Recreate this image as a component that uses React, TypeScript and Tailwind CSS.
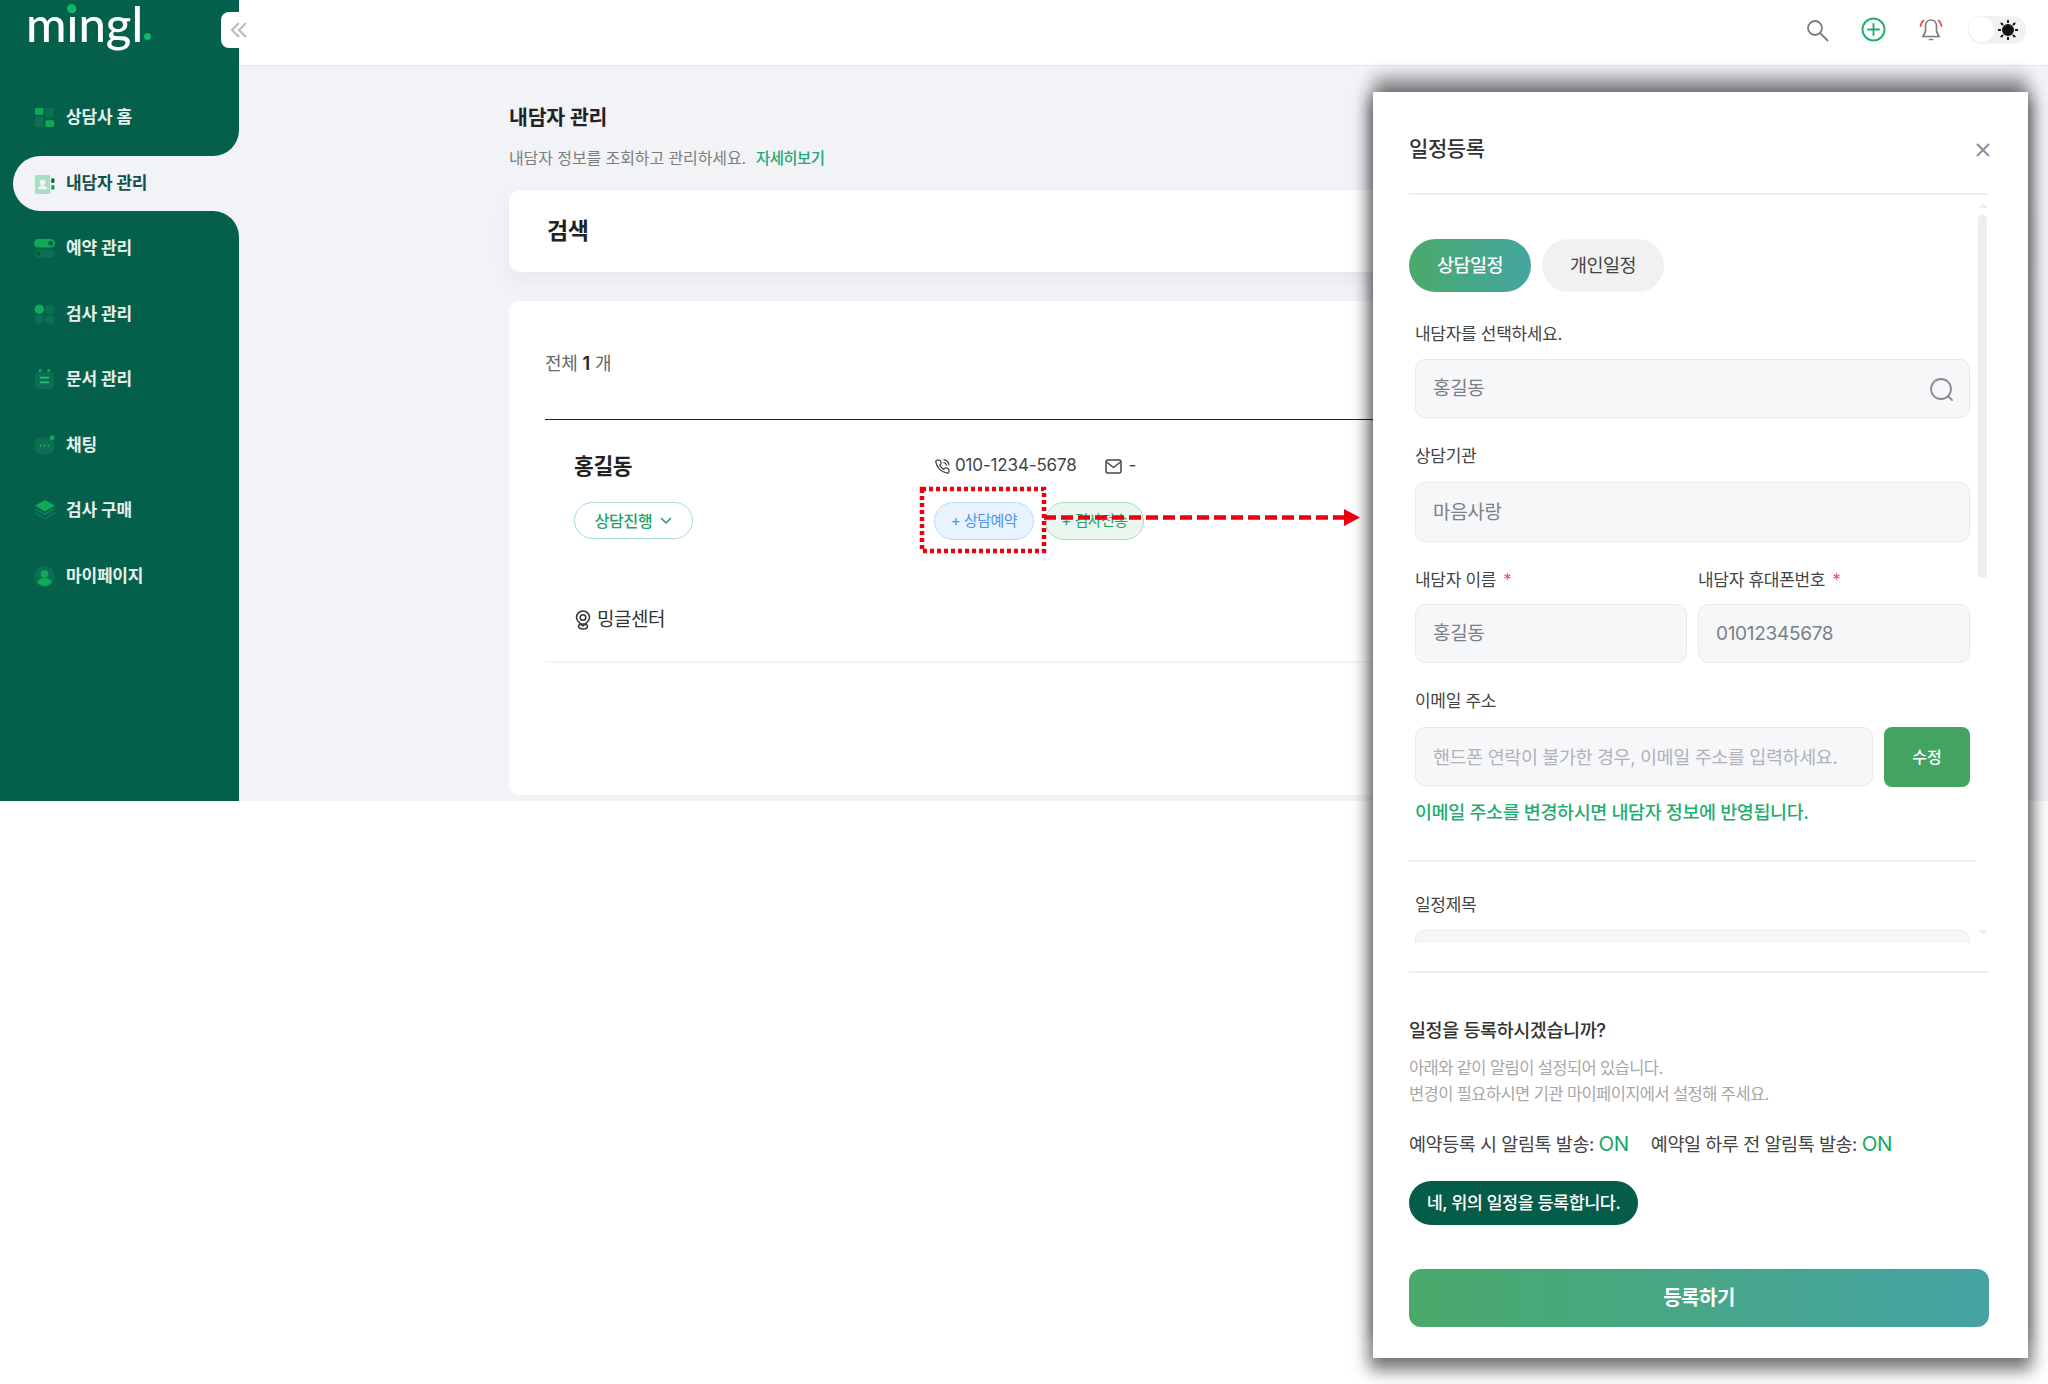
import React from "react";

const G1 = "#0fa958";
const G2 = "#0a7050";

const IconHome = () => (
  <svg width="21" height="21" viewBox="0 0 22 22">
    <rect x="1" y="1" width="9" height="7" rx="1.5" fill={G1} />
    <rect x="12" y="1" width="9" height="10" rx="1.5" fill={G2} />
    <rect x="1" y="10" width="9" height="11" rx="1.5" fill={G2} />
    <rect x="12" y="14" width="9" height="7" rx="1.5" fill={G1} />
  </svg>
);
const IconClient = () => (
  <svg width="21" height="21" viewBox="0 0 22 22">
    <rect x="1" y="1" width="16" height="20" rx="2" fill="#a9dfc6" />
    <circle cx="9" cy="9" r="3" fill="#eef7f2" />
    <path d="M4 16c.6-3 2.6-4 5-4s4.400 1 5 4z" fill="#eef7f2" />
    <rect x="18" y="4.500" width="3.500" height="5" rx="1.500" fill={G2} />
    <rect x="18" y="11.500" width="3.500" height="5" rx="1.500" fill={G1} />
  </svg>
);
const IconToggle = () => (
  <svg width="21" height="21" viewBox="0 0 22 22">
    <rect x="0" y="1" width="22" height="9" rx="4.500" fill={G1} />
    <circle cx="17.500" cy="5.500" r="2.500" fill="#046049" />
    <rect x="0" y="12" width="22" height="9" rx="4.500" fill={G2} />
    <circle cx="4.500" cy="16.500" r="2.500" fill="#046049" />
  </svg>
);
const IconDots = () => (
  <svg width="21" height="21" viewBox="0 0 22 22">
    <circle cx="5.500" cy="5.500" r="5" fill={G1} />
    <circle cx="16.500" cy="5.500" r="5" fill={G2} />
    <circle cx="5.500" cy="16.500" r="5" fill={G2} />
    <circle cx="16.500" cy="16.500" r="5" fill={G2} />
  </svg>
);
const IconDoc = () => (
  <svg width="21" height="21" viewBox="0 0 22 22">
    <rect x="5" y="0" width="3" height="5" rx="1" fill={G1} />
    <rect x="14" y="0" width="3" height="5" rx="1" fill={G1} />
    <rect x="1" y="3" width="20" height="18" rx="4" fill={G2} />
    <rect x="6" y="8" width="10" height="2" rx="1" fill="#2cbf7a" />
    <rect x="6" y="13" width="10" height="2" rx="1" fill="#2cbf7a" />
  </svg>
);
const IconChat = () => (
  <svg width="21" height="21" viewBox="0 0 22 22">
    <path d="M7 3h8c3.500 0 6 2.500 6 6v4c0 4-2.500 7-6 7H7c-3.500 0-6-3-6-7V9c0-3.500 2.500-6 6-6z" fill={G2} />
    <circle cx="7" cy="11" r=".9" fill="#2cbf7a" />
    <circle cx="11" cy="11" r=".9" fill="#2cbf7a" />
    <circle cx="15" cy="11" r=".9" fill="#2cbf7a" />
    <circle cx="19" cy="3" r="2.600" fill={G1} />
  </svg>
);
const IconLayers = () => (
  <svg width="22" height="21" viewBox="0 0 23 22">
    <path d="M1 15l10.500 6L22 15v-3l-10.500 6L1 12z" fill={G2} />
    <path d="M1 10l10.500 6L22 10V8l-10.500 6L1 8z" fill="#0a8155" />
    <path d="M11.500 0L22 6l-10.500 6L1 6z" fill={G1} />
  </svg>
);
const IconUser = () => (
  <svg width="21" height="21" viewBox="0 0 22 22">
    <circle cx="11" cy="11" r="11" fill={G2} />
    <circle cx="11" cy="8.500" r="4" fill={G1} />
    <path d="M3.500 17c1-3 4-4.500 7.500-4.500s6.500 1.500 7.500 4.500c-2 2.600-4.500 4-7.500 4s-5.500-1.400-7.500-4z" fill={G1} />
  </svg>
);

function NavItem({ icon, label, color = "text-[#e6f0ec]" }: { icon: React.ReactNode; label: string; color?: string }) {
  return (
    <div className="flex h-[65.500px] items-center">
      <div className="flex w-[66px] justify-start pl-[34px]">{icon}</div>
      <span className={`text-[17px] font-semibold tracking-[-0.2px] ${color}`}>{label}</span>
    </div>
  );
}

function Sidebar() {
  return (
    <aside className="flex h-full w-[239px] shrink-0 flex-col bg-[#f1f3f7]">
      <div className="relative h-[156px] rounded-br-[26px] bg-[#04604a]">
        <div className="relative h-[85px]">
          <span className="absolute left-[26px] top-[3px] text-[49px] font-medium leading-[40px] text-white [font-family:Lato,sans-serif]">
            mingl
          </span>
          <span className="absolute left-[67px] top-[4px] h-[9px] w-[9px] rounded-full bg-[#12b566]" />
          <span className="absolute left-[144px] top-[33px] h-[7px] w-[7px] rounded-full bg-[#12b566]" />
        </div>
        <div className="absolute left-0 top-[85px] w-full">
          <NavItem icon={<IconHome />} label="상담사 홈" />
        </div>
      </div>
      <div className="h-[55px] bg-[#04604a] pl-[13px]">
        <div className="flex h-full items-center rounded-l-full bg-[#f1f3f7] pl-[21px] pt-[1px]">
          <div className="flex w-[32px] justify-start">
            <IconClient />
          </div>
          <span className="text-[17px] font-semibold tracking-[-0.2px] text-[#14504a]">내담자 관리</span>
        </div>
      </div>
      <div className="flex-1 rounded-tr-[26px] bg-[#04604a] pt-[5px]">
        <NavItem icon={<IconToggle />} label="예약 관리" />
        <NavItem icon={<IconDots />} label="검사 관리" />
        <NavItem icon={<IconDoc />} label="문서 관리" />
        <NavItem icon={<IconChat />} label="채팅" />
        <NavItem icon={<IconLayers />} label="검사 구매" />
        <NavItem icon={<IconUser />} label="마이페이지" />
      </div>
    </aside>
  );
}

function Header() {
  return (
    <header className="relative flex h-[66px] shrink-0 items-center justify-end border-b border-[#e3e5ea] bg-white pb-[6px]">
      <div className="absolute left-[-18px] top-[12px] flex h-[36px] w-[32px] items-center justify-center rounded-l-[8px] bg-white pl-[4px]">
        <svg width="18" height="16" viewBox="0 0 18 16" fill="none" stroke="#b9bac2" strokeWidth="2">
          <path d="M9 1L2 8l7 7" />
          <path d="M16 1L9 8l7 7" />
        </svg>
      </div>
      <div className="flex items-center pr-[22px]">
        <svg className="mr-[32px]" width="24" height="24" viewBox="0 0 24 24" fill="none" stroke="#7c7c7c" strokeWidth="1.800" strokeLinecap="round">
          <circle cx="10" cy="10" r="7" />
          <path d="M15 15l7.500 7.500" />
        </svg>
        <svg className="mr-[32px]" width="25" height="25" viewBox="0 0 25 25" fill="none" stroke="#1fae6e" strokeWidth="1.900" strokeLinecap="round">
          <circle cx="12.500" cy="12.500" r="11" />
          <path d="M12.500 7v11M7 12.500h11" />
        </svg>
        <svg className="mr-[24px]" width="26" height="26" viewBox="0 0 26 26" fill="none" strokeLinecap="round">
          <path d="M13 3c-3.500 0-5.500 2.600-5.500 6v5.500L5 19.500h16l-2.500-5V9c0-3.400-2-6-5.500-6z" stroke="#7c7c7c" strokeWidth="1.700" />
          <path d="M11.500 22.500h3" stroke="#7c7c7c" strokeWidth="1.700" />
          <path d="M2.500 9c.3-2.400 1.300-4.200 3-5.500M23.500 9c-.3-2.400-1.300-4.200-3-5.500" stroke="#ee4a4a" strokeWidth="1.800" />
        </svg>
        <div className="flex h-[28px] w-[58px] items-center justify-between rounded-full bg-[#f1f1f3] pl-[1px] pr-[8px]">
          <span className="h-[25px] w-[25px] rounded-full bg-white" />
          <svg width="20" height="20" viewBox="0 0 20 20" stroke="#111" strokeWidth="2" strokeLinecap="round">
            <circle cx="10" cy="10" r="5" fill="#111" />
            <path d="M10 .8v1.400M10 17.800v1.400M.8 10h1.400M17.800 10h1.400M3.500 3.500l1 1M15.500 15.500l1 1M3.500 16.500l1-1M15.500 4.500l1-1" />
          </svg>
        </div>
      </div>
    </header>
  );
}

function Main() {
  return (
    <main className="flex-1 overflow-hidden pl-[270px] pr-[20px]">
      <h1 className="mt-[38px] text-[20.500px] font-semibold leading-[28px] tracking-[-0.2px] text-[#222]">내담자 관리</h1>
      <p className="mt-[14px] text-[16px] leading-[24px] tracking-[-0.1px] text-[#7d7d7d]">
        내담자 정보를 조회하고 관리하세요.
        <span className="ml-[10px] text-[15.500px] font-medium tracking-[-0.6px] text-[#27a872]">자세히보기</span>
      </p>
      <section className="mt-[19px] flex h-[82px] items-center rounded-[12px] bg-white pl-[38px] shadow-[0_8px_20px_rgba(30,40,60,0.05)]">
        <h2 className="text-[23px] font-semibold tracking-[-0.4px] text-[#222]">검색</h2>
      </section>
      <section className="mt-[29px] h-[494px] rounded-[12px] bg-white px-[36px] pt-[50px]">
        <p className="text-[18px] leading-[26px] tracking-[-0.2px] text-[#666]">
          전체 <b className="font-semibold text-[#222]">1</b> 개
        </p>
        <div className="mt-[42px] border-t border-[#222]" />
        <div className="ml-[29px] mt-[31px] flex">
          <div className="w-[360px]">
            <div className="text-[21.500px] font-semibold leading-[30px] tracking-[-0.4px] text-[#222]">홍길동</div>
            <div className="mt-[21px] flex h-[37px] w-[119px] items-center justify-center rounded-full border border-[#a5dfc4] text-[16px] font-medium tracking-[-0.3px] text-[#1fa36a]">
              상담진행
              <svg className="ml-[8px]" width="12" height="8" viewBox="0 0 12 8" fill="none" stroke="#2b9a68" strokeWidth="1.500">
                <path d="M1 1l5 5 5-5" />
              </svg>
            </div>
          </div>
          <div>
            <div className="flex h-[30px] items-center text-[17px] tracking-[-0.15px] text-[#444]">
              <svg className="mr-[4px]" width="17" height="17" viewBox="0 0 24 24" fill="none" stroke="#444" strokeWidth="1.800" strokeLinecap="round" strokeLinejoin="round">
                <path d="M21 16.500v3a2 2 0 0 1-2.200 2A19 19 0 0 1 2.500 5.200 2 2 0 0 1 4.500 3h3a2 2 0 0 1 2 1.700l.4 2.500a2 2 0 0 1-.6 1.800L8 10.300a16 16 0 0 0 5.700 5.700l1.300-1.300a2 2 0 0 1 1.800-.6l2.500.4a2 2 0 0 1 1.700 2z" />
                <path d="M14 2.500a8 8 0 0 1 7 7M14 6.500a4 4 0 0 1 3.500 3.500" />
              </svg>
              <span>010-1234-5678</span>
              <svg className="ml-[28px] mr-[7px]" width="17" height="15" viewBox="0 0 17 15" fill="none" stroke="#444" strokeWidth="1.500" strokeLinejoin="round">
                <rect x="1" y="1" width="15" height="13" rx="2" />
                <path d="M1.500 3l7 5.500 7-5.500" />
              </svg>
              <span>-</span>
            </div>
            <div className="mt-[21px] flex gap-[11px]">
              <div className="flex h-[38px] w-[100px] items-center justify-center rounded-full border border-[#bcd8fb] bg-[#e9f3ff] text-[15px] tracking-[-0.5px] text-[#4c94ee]">
                + 상담예약
              </div>
              <div className="flex h-[38px] w-[99px] items-center justify-center rounded-full border border-[#a5dcb9] bg-[#eaf6ee] text-[15px] tracking-[-0.5px] text-[#1fa36a]">
                + 검사전송
              </div>
            </div>
          </div>
        </div>
        <div className="ml-[30px] mt-[65px] flex h-[30px] items-center text-[19px] tracking-[-0.5px] text-[#333]">
          <svg className="mr-[6px]" width="16" height="20" viewBox="0 0 16 20" fill="none" stroke="#333" strokeWidth="1.500">
            <path d="M8 1a6.500 6.500 0 0 0-6.500 6.500C1.500 11 5 13.500 8 16c3-2.500 6.500-5 6.500-8.500A6.500 6.500 0 0 0 8 1z" />
            <circle cx="8" cy="7.500" r="2.800" />
            <ellipse cx="8" cy="16.500" rx="4.500" ry="2.500" />
          </svg>
          밍글센터
        </div>
        <div className="mt-[26px] border-t-2 border-[#f3f4f6]" />
      </section>
    </main>
  );
}

function Label({ children, className = "" }: { children: React.ReactNode; className?: string }) {
  return <div className={`text-[17px] leading-[24px] tracking-[-0.3px] text-[#444] ${className}`}>{children}</div>;
}

function Field({
  children,
  className = "",
  h = "h-[59px]",
  text = "text-[19px] tracking-[-0.3px] text-[#7b7f88]",
}: {
  children?: React.ReactNode;
  className?: string;
  h?: string;
  text?: string;
}) {
  return (
    <div className={`flex items-center rounded-[10px] border border-[#e8e9ed] bg-[#f6f7f9] pl-[17px] pt-[2px] ${text} ${h} ${className}`}>
      {children}
    </div>
  );
}

const Star = () => <span className="ml-[7px] text-[17px] text-[#ef4a78]">*</span>;

function Modal() {
  return (
    <div className="absolute left-[1373px] top-[92px] flex h-[1266px] w-[655px] flex-col bg-white pl-[36px] pr-[39px] shadow-[0_8px_16px_4px_rgba(0,0,0,0.55),0_-16px_16px_-1px_rgba(0,0,0,0.4)]">
      <div className="flex h-[103px] shrink-0 items-start justify-between border-b-2 border-[#efefef] pt-[44px]">
        <h2 className="text-[21px] font-medium leading-[26px] tracking-[-0.4px] text-[#333]">일정등록</h2>
        <svg className="mr-[-1px] mt-[7px]" width="14" height="14" viewBox="0 0 14 14" stroke="#8f93a3" strokeWidth="2.200">
          <path d="M1 1l12 12M13 1L1 13" />
        </svg>
      </div>
      <div className="relative h-[748px] shrink-0 overflow-hidden">
        <div className="absolute left-[569px] top-[8px] h-0 w-0 border-x-[5px] border-b-[5px] border-x-transparent border-b-[#eceef0]" />
        <div className="absolute left-[569px] top-[20px] h-[363px] w-[9px] rounded-full bg-[#eceef0]" />
        <div className="absolute left-[569px] top-[735px] h-0 w-0 border-x-[5px] border-t-[5px] border-x-transparent border-t-[#eceef0]" />
        <div className="flex gap-[11px] pt-[44px]">
          <div className="flex h-[53px] w-[122px] items-center justify-center rounded-full bg-gradient-to-r from-[#4aa96a] to-[#45a5a0] text-[18.500px] font-medium tracking-[-0.5px] text-white">
            상담일정
          </div>
          <div className="flex h-[53px] w-[122px] items-center justify-center rounded-full bg-[#f1f1f1] text-[18.500px] tracking-[-0.5px] text-[#444]">
            개인일정
          </div>
        </div>
        <div className="box-content w-[555px] pl-[6px]">
          <Label className="mt-[30px]">내담자를 선택하세요.</Label>
          <Field className="mt-[13px] justify-between pr-[14px]">
            <span>홍길동</span>
            <svg width="26" height="26" viewBox="0 0 26 26" fill="none" stroke="#888b94" strokeWidth="1.800" strokeLinecap="round">
              <circle cx="12" cy="12" r="10" />
              <path d="M19 19l4 4" />
            </svg>
          </Field>
          <Label className="mt-[26px]">상담기관</Label>
          <Field className="mt-[14px]" h="h-[60px]">마음사랑</Field>
          <div className="mt-[26px] grid grid-cols-2 gap-x-[11px]">
            <div>
              <Label>내담자 이름<Star /></Label>
              <Field className="mt-[12px]">홍길동</Field>
            </div>
            <div>
              <Label>내담자 휴대폰번호<Star /></Label>
              <Field className="mt-[12px]">01012345678</Field>
            </div>
          </div>
          <Label className="mt-[26px]">이메일 주소</Label>
          <div className="mt-[14px] flex gap-[11px]">
            <Field className="flex-1" text="text-[18.500px] tracking-[-0.4px] text-[#b0b3ba]">핸드폰 연락이 불가한 경우, 이메일 주소를 입력하세요.</Field>
            <div className="flex h-[60px] w-[86px] items-center justify-center rounded-[8px] bg-[#43a461] text-[16px] font-medium text-white">수정</div>
          </div>
          <p className="mt-[13px] text-[18.500px] font-medium leading-[24px] tracking-[-0.4px] text-[#1fae6e]">이메일 주소를 변경하시면 내담자 정보에 반영됩니다.</p>
        </div>
        <div className="mt-[36px] w-[567px] border-t-2 border-[#efefef]" />
        <div className="box-content w-[555px] pl-[6px]">
          <Label className="mt-[31px]">일정제목</Label>
          <Field className="mt-[13px]" />
        </div>
      </div>
      <div className="mt-[28px] shrink-0 border-t-2 border-[#efefef]">
        <h3 className="mt-[45px] text-[18.500px] font-medium leading-[24px] tracking-[-0.4px] text-[#333]">일정을 등록하시겠습니까?</h3>
        <p className="mt-[13px] text-[16.500px] leading-[26px] tracking-[-0.6px] text-[#a7a7a7]">
          아래와 같이 알림이 설정되어 있습니다.
          <br />
          변경이 필요하시면 기관 마이페이지에서 설정해 주세요.
        </p>
        <p className="mt-[24px] flex items-baseline text-[18.500px] leading-[26px] tracking-[-0.45px] text-[#444]">
          <span>예약등록 시 알림톡 발송: <span className="text-[20.500px] text-[#13a96b]">ON</span></span>
          <span className="ml-[22px]">예약일 하루 전 알림톡 발송: <span className="text-[20.500px] text-[#13a96b]">ON</span></span>
        </p>
        <div className="mt-[24px] flex h-[44px] w-[229px] items-center justify-center rounded-full bg-[#055c48] text-[17.500px] font-medium tracking-[-0.5px] text-white">
          네, 위의 일정을 등록합니다.
        </div>
        <div className="mt-[44px] flex h-[58px] items-center justify-center rounded-[12px] bg-gradient-to-r from-[#4aa96a] to-[#45a3a3] text-[20px] font-semibold tracking-[-0.5px] text-white">
          등록하기
        </div>
      </div>
    </div>
  );
}

function Annotation() {
  return (
    <svg className="absolute left-[918px] top-[484px]" width="450" height="72" viewBox="0 0 450 72" fill="none">
      <rect x="4" y="5" width="122" height="62" stroke="#eb0010" strokeWidth="4.500" strokeDasharray="4 3" />
      <path d="M126 33.500H430" stroke="#eb0010" strokeWidth="4.500" strokeDasharray="12 5" />
      <path d="M426 25l16 8.500-16 8.500z" fill="#eb0010" />
    </svg>
  );
}

export default function App() {
  return (
    <div className="relative h-[1384px] w-[2048px] overflow-hidden bg-white [font-family:Inter,'Noto_Sans_CJK_KR','Noto_Sans',sans-serif]">
      <div className="flex h-[801px] bg-[#f1f3f7]">
        <Sidebar />
        <div className="flex min-w-0 flex-1 flex-col">
          <Header />
          <Main />
        </div>
      </div>
      <Annotation />
      <Modal />
    </div>
  );
}
